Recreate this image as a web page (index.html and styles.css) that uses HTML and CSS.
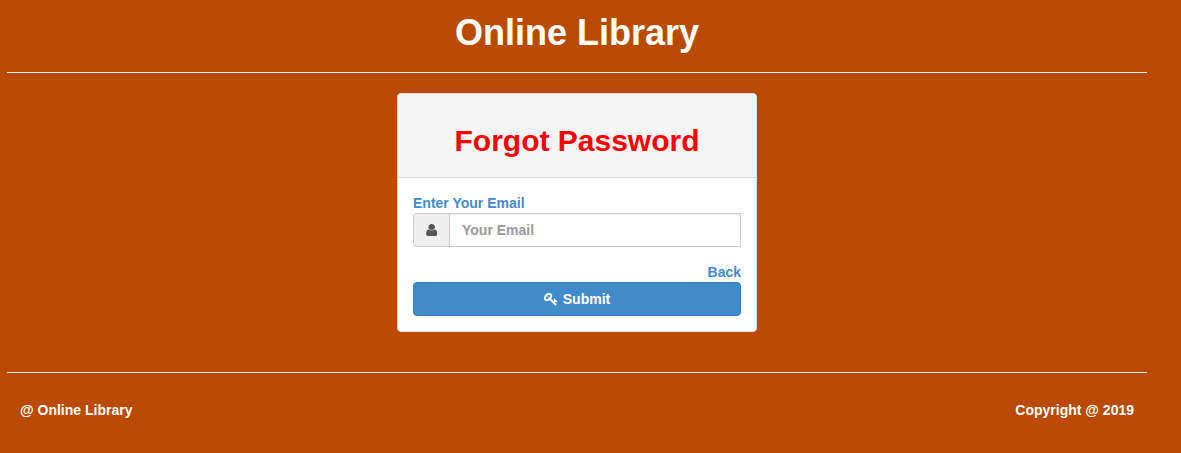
FILE: index.html
```html
<!DOCTYPE html>
<html lang="en">
<head>
<meta charset="utf-8">
<title>Online Library</title>
<link rel="stylesheet" href="styles.css">
</head>
<body>
<div class="container">
  <header class="header"><h1 class="title">Online Library</h1></header>
  <main class="main">
    <section class="panel">
      <div class="panel-heading"><h2 class="panel-title">Forgot Password</h2></div>
      <form class="panel-body">
        <label class="label" for="email">Enter Your Email</label>
        <div class="input-group">
          <span class="addon"><svg class="icon icon-user" viewBox="0 0 1792 1792" preserveAspectRatio="none"><path d="M1536 1399q0 109-62.5 187t-150.5 78h-854q-88 0-150.5-78t-62.5-187q0-85 8.5-160.5t31.5-152 58.5-131 94-89 134.5-34.5q131 128 313 128t313-128q76 0 134.5 34.5t94 89 58.5 131 31.5 152 8.5 160.5zm-256-887q0 159-112.5 271.5t-271.5 112.5-271.5-112.5-112.5-271.5 112.5-271.5 271.5-112.5 271.5 112.5 112.5 271.5z"/></svg></span>
          <input class="input" id="email" type="text" placeholder="Your Email">
        </div>
        <a class="back" href="#">Back</a>
        <button class="submit" type="button"><svg class="icon icon-key" viewBox="0 0 1792 1792"><path d="M832 512q0-80-56-136t-136-56-136 56-56 136q0 42 19 83-41-19-83-19-80 0-136 56t-56 136 56 136 136 56 136-56 56-136q0-42-19-83 41 19 83 19 80 0 136-56t56-136zm851 704q0 17-49 66t-66 49q-9 0-28.5-16t-36.5-33-38.5-40-24.5-26l-96 96 220 220q28 28 28 68 0 42-39 81t-81 39q-40 0-68-28l-671-671q-176 131-365 131-163 0-265.5-102.5t-102.5-265.5q0-160 95-313t248-248 313-95q163 0 265.5 102.5t102.5 265.5q0 189-131 365l355 355 96-96q-3-3-26-24.5t-40-38.5-33-36.5-16-28.5q0-17 49-66t66-49q13 0 23 10 6 6 46 44.5t82 79.5 86.5 86 73 78 28.5 41z"/></svg><span>Submit</span></button>
      </form>
    </section>
  </main>
  <footer class="footer"><span>@ Online Library</span><span>Copyright @ 2019</span></footer>
</div>
</body>
</html>
```
FILE: styles.css
```css
* { box-sizing: border-box; }
body {
  margin: 0;
  background: #b94a00;
  font: bold 14px/20px "Liberation Sans", Arial, sans-serif;
  color: #fff;
}
.container { width: 1140px; margin-left: 7px; }
.header {
  height: 73px;
  padding-top: 13px;
  border-bottom: 1px solid #eee;
  text-align: center;
}
.title { margin: 0; font-size: 36px; line-height: 40px; }
.main {
  display: flex;
  justify-content: center;
  padding: 20px 0 40px;
}
.panel {
  width: 360px;
  background: #fff;
  border: 1px solid #ddd;
  border-radius: 4px;
}
.panel-heading {
  padding: 30px 15px 20px;
  background: #f5f5f5;
  border-bottom: 1px solid #ddd;
  border-radius: 3px 3px 0 0;
  text-align: center;
}
.panel-title { margin: 0; font-size: 30px; line-height: 33px; color: #f00; }
.panel-body { display: flex; flex-direction: column; margin: 0; padding: 15px; }
.label, .back { color: #428bca; }
.input-group { display: flex; height: 34px; margin-bottom: 15px; }
.addon {
  display: flex;
  align-items: center;
  justify-content: center;
  width: 36px;
  background: #eee;
  border: 1px solid #ccc;
  border-right: 0;
  border-radius: 4px 0 0 4px;
  color: #555;
}
.icon { display: block; width: 14px; height: 14px; fill: currentColor; }
.icon-user { width: 15.4px; }
.icon-key { stroke: currentColor; stroke-width: 40; }
.input {
  flex: 1;
  min-width: 0;
  padding: 6px 12px;
  border: 1px solid #ccc;
  border-radius: 0;
  background: #fff;
  box-shadow: inset 0 1px 1px rgba(0, 0, 0, .075);
  font: inherit;
  color: #555;
}
.input::placeholder { color: #999; opacity: 1; }
.back { align-self: flex-end; text-decoration: none; }
.submit {
  display: flex;
  align-items: center;
  justify-content: center;
  gap: 5px;
  height: 34px;
  padding: 0;
  background: #428bca;
  border: 1px solid #357ebd;
  border-radius: 4px;
  font: inherit;
  color: #fff;
}
.footer {
  display: flex;
  justify-content: space-between;
  height: 81px;
  padding: 27px 13px 0;
  border-top: 1px solid #eee;
}
```
